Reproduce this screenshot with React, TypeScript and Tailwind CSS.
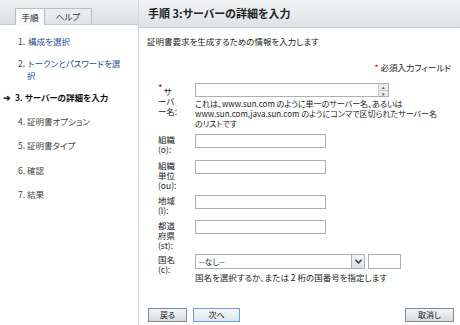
import React from "react";

const font = "font-['Noto_Sans_CJK_JP','Noto_Sans',sans-serif] [font-feature-settings:'palt']";

function Input({ w }: { w: string }) {
  return <div className={`${w} h-[14px] border border-[#a9b0b6] bg-white shrink-0`} />;
}

function Label({ lines, req }: { lines: string[]; req?: boolean }) {
  return (
    <div className="w-[48px] shrink-0 pl-[11px] flex flex-col text-[8.5px] leading-[10px] text-[#222] whitespace-nowrap">
      {lines.map((l, i) => (
        <span key={i}>
          {i === 0 && req ? <span className="text-[#cc0000] text-[10px] leading-none relative -top-[3px] mr-[1px]">*</span> : null}
          {l}
        </span>
      ))}
    </div>
  );
}

export default function App() {
  return (
    <div className={`w-[460px] h-[325px] flex bg-white text-[#222] ${font} overflow-hidden`}>
      {/* Sidebar */}
      <div className="w-[139px] shrink-0 border-r border-[#d3d6d9] flex flex-col">
        <div className="h-[25px] bg-gradient-to-b from-[#eef0f1] to-[#dde0e3] border-b border-[#c4c9cd] flex items-end pl-[15px]">
          <div className="h-[17px] w-[30px] -mb-[1px] bg-[#f7f8f8] border border-b-0 border-[#b8bec3] flex items-center justify-center text-[8.5px] text-[#111]">手順</div>
          <div className="h-[16px] w-[47px] bg-gradient-to-b from-[#eceef0] to-[#dfe2e5] border border-l-0 border-b-0 border-[#b8bec3] flex items-center justify-center text-[8.5px] text-[#333]">ヘルプ</div>
        </div>
        <div className="flex flex-col text-[8.5px] leading-[12px] pt-[10px]">
          <div className="pl-[18px] h-[22px] flex items-start"><span className="text-[#444] mr-[3px]">1.</span><span className="text-[#1a4f93]">構成を選択</span></div>
          <div className="pl-[18px] h-[12px] flex items-start pr-[4px]">
            <span className="text-[#444] mr-[3px]">2.</span>
            <span className="text-[#1a4f93]">トークンとパスワードを選</span>
          </div>
          <div className="pl-[27px] h-[22px] text-[#1a4f93]">択</div>
          <div className="pl-[3px] h-[24px] flex items-start font-bold text-[#111]"><span className="mr-[4px] text-[#222]">➜</span>3. サーバーの詳細を入力</div>
          <div className="pl-[18px] h-[24px] text-[#444]">4. 証明書オプション</div>
          <div className="pl-[18px] h-[25px] text-[#444]">5. 証明書タイプ</div>
          <div className="pl-[18px] h-[24px] text-[#444]">6. 確認</div>
          <div className="pl-[18px] h-[24px] text-[#444]">7. 結果</div>
        </div>
      </div>

      {/* Main */}
      <div className="flex-1 min-w-0 flex flex-col">
        <div className="h-[28px] shrink-0 bg-gradient-to-b from-[#f2f3f4] to-[#dfe2e5] border-b border-[#c8cdd1] flex items-center pl-[9px] text-[11px] font-bold text-[#222]">
          手順 3:サーバーの詳細を入力
        </div>
        <div className="px-[8px] flex flex-col flex-1">
          <div className="mt-[8px] text-[8.5px] leading-[11px]">証明書要求を生成するための情報を入力します</div>
          <div className="mt-[15px] self-end text-[8.5px] leading-[11px] pr-[1px]"><span className="text-[#cc0000]">*</span> 必須入力フィールド</div>

          <div className="mt-[11px] flex flex-col">
            {/* server */}
            <div className="flex h-[50px]">
              <div className="pt-[2px]"><Label lines={["サ", "ーバ", "ー名:"]} req /></div>
              <div className="flex flex-col -mt-[1px]">
                <div className="w-[194px] h-[14px] border border-[#a9b0b6] bg-white flex justify-end">
                  <div className="w-[10px] flex flex-col border-l border-[#c8ccd0]">
                    <div className="flex-1 bg-[#e9ebed] border-b border-[#c8ccd0] flex items-center justify-center text-[5px] leading-none text-[#555]">▴</div>
                    <div className="flex-1 bg-[#e9ebed] flex items-center justify-center text-[5px] leading-none text-[#555]">▾</div>
                  </div>
                </div>
                <div className="mt-[2px] text-[8px] leading-[10px] whitespace-nowrap">
                  これは、www.sun.com のように単一のサーバー名、あるいは<br />
                  www.sun.com,java.sun.com のようにコンマで区切られたサーバー名<br />
                  のリストです
                </div>
              </div>
            </div>
            <div className="flex h-[26px]">
              <Label lines={["組織", "(o):"]} />
              <Input w="w-[131px]" />
            </div>
            <div className="flex h-[35px]">
              <Label lines={["組織", "単位", "(ou):"]} />
              <Input w="w-[131px]" />
            </div>
            <div className="flex h-[25px]">
              <Label lines={["地域", "(l):"]} />
              <Input w="w-[131px]" />
            </div>
            <div className="flex h-[34px]">
              <Label lines={["都道", "府県", "(st):"]} />
              <Input w="w-[131px]" />
            </div>
            <div className="flex">
              <Label lines={["国名", "(c):"]} />
              <div className="flex flex-col">
                <div className="flex gap-[3px]">
                  <div className="w-[170px] h-[15px] border border-[#a9b0b6] bg-white flex items-center">
                    <span className="flex-1 pl-[3px] text-[8px] leading-none">--なし--</span>
                    <div className="w-[13px] h-[13px] bg-gradient-to-b from-[#f4f5f6] to-[#dde0e3] border-l border-[#a9b0b6] flex items-center justify-center">
                      <svg width="7" height="5" viewBox="0 0 7 5"><path d="M0.5 0.8 L3.5 4 L6.5 0.8" stroke="#333" strokeWidth="1.4" fill="none" /></svg>
                    </div>
                  </div>
                  <div className="w-[33px] h-[15px] border border-[#a9b0b6] bg-white" />
                </div>
                <div className="mt-[3px] text-[8.5px] leading-[10px] whitespace-nowrap">国名を選択するか、または 2 桁の国番号を指定します</div>
              </div>
            </div>
          </div>

          <div className="mt-auto mb-[3px] flex items-center">
            <div className="ml-[1px] w-[39px] h-[14px] border border-[#7f8a94] bg-gradient-to-b from-[#f3f4f5] to-[#d9dde0] text-[8px] flex items-center justify-center text-[#111]">戻る</div>
            <div className="ml-[6px] w-[47px] h-[14px] border border-[#6f9cc8] bg-gradient-to-b from-[#f5f8fb] to-[#dde6ee] text-[8px] flex items-center justify-center text-[#111]">次へ</div>
            <div className="ml-auto mr-[-2px] w-[49px] h-[14px] border border-[#7f8a94] bg-gradient-to-b from-[#f3f4f5] to-[#d9dde0] text-[8px] flex items-center justify-center text-[#111]">取消し</div>
          </div>
        </div>
      </div>
    </div>
  );
}
